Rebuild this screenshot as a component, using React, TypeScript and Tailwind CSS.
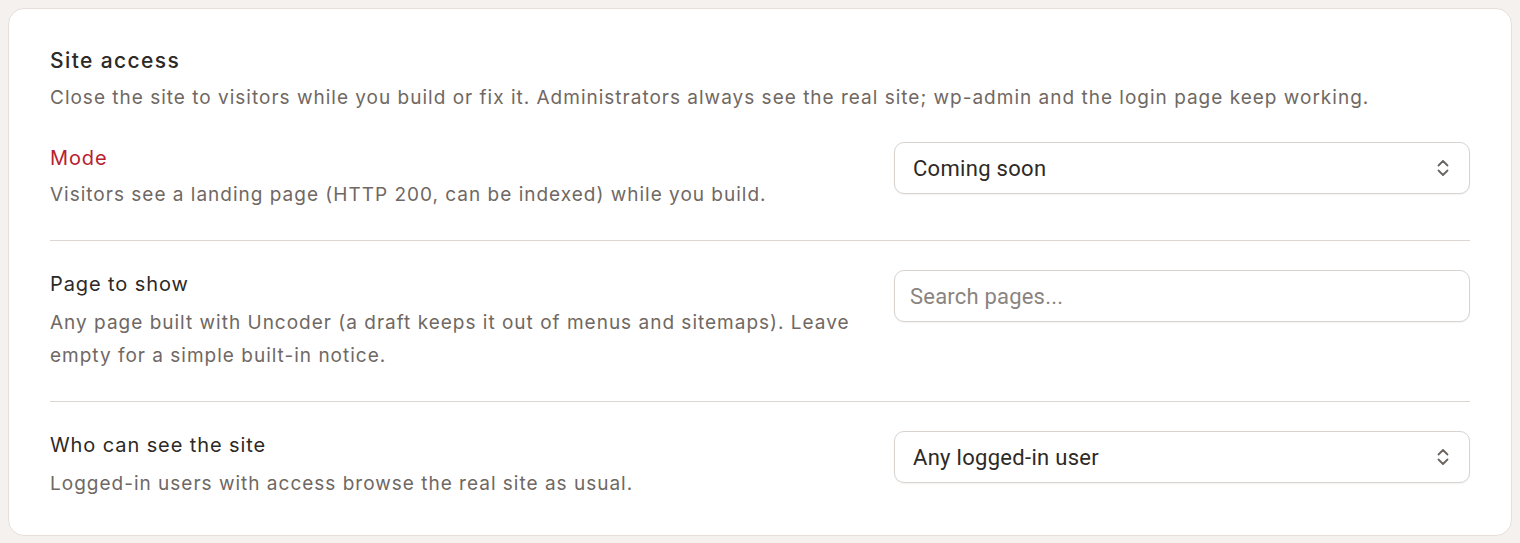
import React from 'react';

function Chevrons() {
  return (
    <svg width="16" height="20" viewBox="0 0 16 20" fill="none" stroke="#6b6461" strokeWidth="1.8" strokeLinecap="round" strokeLinejoin="round">
      <path d="M3.5 7.5 8 3l4.5 4.5" />
      <path d="M3.5 12.5 8 17l4.5-4.5" />
    </svg>
  );
}

function SelectBox({ value }: { value: string }) {
  return (
    <div className="h-[52px] w-full rounded-[10px] border-[1.5px] border-[#d9d3cf] bg-white flex items-center justify-between pl-[18px] pr-[18px] shadow-[0_1px_2px_rgba(0,0,0,0.05)]">
      <span className="text-[22px] tracking-[0.3px] text-[#2d2926] [font-family:Roboto,'Liberation_Sans',sans-serif]">{value}</span>
      <Chevrons />
    </div>
  );
}

function SearchBox() {
  return (
    <div className="h-[52px] w-full rounded-[10px] border-[1.5px] border-[#d9d3cf] bg-white flex items-center pl-[15px] shadow-[0_1px_2px_rgba(0,0,0,0.05)]">
      <input
        placeholder="Search pages..."
        className="w-full outline-none bg-transparent text-[22px] tracking-[0.2px] text-[#2d2926] placeholder:text-[#8a8480] [font-family:Roboto,'Liberation_Sans',sans-serif]"
      />
    </div>
  );
}

export default function App() {
  const rows = [
    {
      label: 'Mode',
      active: true,
      desc: 'Visitors see a landing page (HTTP 200, can be indexed) while you build.',
      control: <SelectBox value="Coming soon" />,
      pad: 'pb-[29px]',
    },
    {
      label: 'Page to show',
      desc: 'Any page built with Uncoder (a draft keeps it out of menus and sitemaps). Leave empty for a simple built-in notice.',
      control: <SearchBox />,
      pad: 'pt-[29px] pb-[29px]',
    },
    {
      label: 'Who can see the site',
      desc: 'Logged-in users with access browse the real site as usual.',
      control: <SelectBox value="Any logged-in user" />,
      pad: 'pt-[29px]',
    },
  ];

  return (
    <div className="min-h-[543px] bg-[#f4f1ee] p-[8px] [font-family:Inter,'Noto_Sans',sans-serif]">
      <div className="rounded-[16px] border border-[#e4dfdb] bg-white px-[41px] pt-[38px] pb-[35px]">
        {/* Header */}
        <h2 className="text-[21px] leading-[28px] tracking-[1.4px] font-medium text-[#2d2926]">Site access</h2>
        <p className="mt-[6px] text-[19px] leading-[33px] tracking-[1px] text-[#6f6863]">
          Close the site to visitors while you build or fix it. Administrators always see the real site; wp-admin and the login page keep working.
        </p>

        {/* Settings rows */}
        <div className="mt-[28px] divide-y divide-[#dcd7d3]">
          {rows.map((row, idx) => (
            <div key={idx} className={`grid grid-cols-[1fr_576px] gap-[44px] items-start ${row.pad}`}>
              <div className={idx === 0 ? 'pt-[2px]' : ''}>
                <div className={`text-[20px] leading-[28px] tracking-[0.9px] ${row.active ? 'text-[#b8202f]' : 'text-[#2d2926]'}`}>
                  {row.label}
                </div>
                <p className={`${idx === 0 ? 'mt-[6px]' : 'mt-[8px]'} text-[19px] leading-[33px] tracking-[1px] text-[#6f6863]`}>{row.desc}</p>
              </div>
              <div>{row.control}</div>
            </div>
          ))}
        </div>
      </div>
    </div>
  );
}
